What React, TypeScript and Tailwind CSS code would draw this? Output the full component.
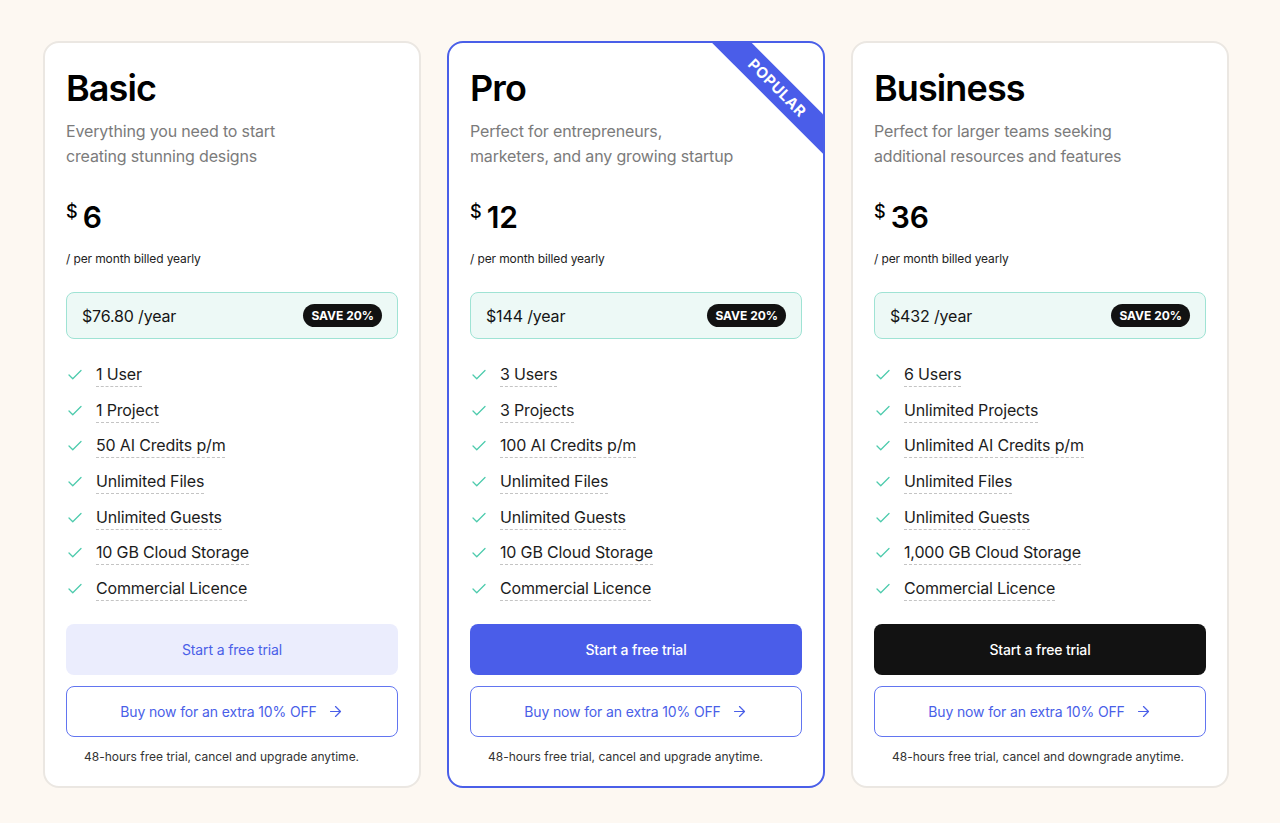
import { ArrowRight, Check } from "lucide-react";

type Plan = {
  name: string;
  description: string[];
  price: string;
  yearly: string;
  features: string[];
  footer: string;
  variant: "basic" | "pro" | "business";
};

const plans: Plan[] = [
  {
    name: "Basic",
    description: ["Everything you need to start", "creating stunning designs"],
    price: "6",
    yearly: "$76.80 /year",
    features: [
      "1 User",
      "1 Project",
      "50 AI Credits p/m",
      "Unlimited Files",
      "Unlimited Guests",
      "10 GB Cloud Storage",
      "Commercial Licence",
    ],
    footer: "48-hours free trial, cancel and upgrade anytime.",
    variant: "basic",
  },
  {
    name: "Pro",
    description: ["Perfect for entrepreneurs,", "marketers, and any growing startup"],
    price: "12",
    yearly: "$144 /year",
    features: [
      "3 Users",
      "3 Projects",
      "100 AI Credits p/m",
      "Unlimited Files",
      "Unlimited Guests",
      "10 GB Cloud Storage",
      "Commercial Licence",
    ],
    footer: "48-hours free trial, cancel and upgrade anytime.",
    variant: "pro",
  },
  {
    name: "Business",
    description: ["Perfect for larger teams seeking", "additional resources and features"],
    price: "36",
    yearly: "$432 /year",
    features: [
      "6 Users",
      "Unlimited Projects",
      "Unlimited AI Credits p/m",
      "Unlimited Files",
      "Unlimited Guests",
      "1,000 GB Cloud Storage",
      "Commercial Licence",
    ],
    footer: "48-hours free trial, cancel and downgrade anytime.",
    variant: "business",
  },
];

const trialStyles = {
  basic: "bg-[#ebedfd] text-[#4a5fe8] font-normal",
  pro: "bg-[#4a5de9] text-white font-medium",
  business: "bg-[#121212] text-white font-medium",
};

const PlanCard = ({ plan }: { plan: Plan }) => {
  const isPro = plan.variant === "pro";
  return (
    <div
      className={`relative w-[378px] overflow-hidden rounded-[16px] border-2 bg-white px-[21px] pt-[23px] pb-[21px] ${
        isPro ? "border-[#4a5fe8]" : "border-[#ebe7e2]"
      }`}
    >
      {isPro && (
        <div className="absolute left-[228px] top-[31px] flex h-[28px] w-[200px] rotate-45 items-center justify-center bg-[#4a5de9] text-[15px] font-bold tracking-[0.03em] text-white">
          POPULAR
        </div>
      )}
      <h2 className="text-[36px] leading-[44px] font-semibold tracking-[-0.025em] text-black">
        {plan.name}
      </h2>
      <p className="mt-[9px] text-[16px] leading-[25px] tracking-[-0.01em] text-[#7b7b7b]">
        {plan.description[0]}
        <br />
        {plan.description[1]}
      </p>
      <div className="mt-[30px] flex h-[36px] items-start gap-[5px] text-black">
        <span className="mt-[3px] text-[18px] leading-[20px] font-medium">$</span>
        <span className="text-[30px] leading-[36px] font-semibold">{plan.price}</span>
      </div>
      <p className="mt-[16px] text-[12px] leading-[16px] tracking-[-0.01em] text-[#222]">/ per month billed yearly</p>
      <div className="mt-[25px] flex h-[47px] items-center justify-between rounded-[8px] border border-[#9fe3d4] bg-[#edf9f6] pl-[15px] pr-[15px]">
        <span className="text-[16px] tracking-[-0.01em] text-[#151515]">{plan.yearly}</span>
        <span className="rounded-full bg-[#121212] px-[8px] py-[4px] text-[12px] leading-[15px] font-bold text-white">
          SAVE 20%
        </span>
      </div>
      <ul className="mt-[23px] flex flex-col gap-[10.67px]">
        {plan.features.map((feature) => (
          <li key={feature} className="flex items-start gap-[12px]">
            <Check size={18} strokeWidth={1.75} className="mt-[4px] shrink-0 text-[#4ecbad]" />
            <span className="border-b border-dashed border-[#c4c4c4] text-[16px] leading-[24px] tracking-[-0.01em] text-[#1c1c1c]">
              {feature}
            </span>
          </li>
        ))}
      </ul>
      <button
        className={`mt-[23px] flex h-[51px] w-full items-center justify-center rounded-[8px] text-[14px] tracking-[-0.01em] ${trialStyles[plan.variant]}`}
      >
        Start a free trial
      </button>
      <button className="mt-[11px] flex h-[51px] w-full items-center justify-center gap-[10px] rounded-[8px] border border-[#6275f0] bg-white text-[14px] tracking-[-0.01em] text-[#4a5fe8]">
        Buy now for an extra 10% OFF
        <ArrowRight size={17} strokeWidth={1.75} />
      </button>
      <p className="mt-[12px] pl-[18px] text-[12px] leading-[16px] text-[#333]">{plan.footer}</p>
    </div>
  );
};

export default function App() {
  return (
    <div
      className="min-h-[823px] w-[1280px] bg-[#fdf8f2] pl-[43px] pt-[41px]"
      style={{ fontFamily: "Inter, 'Noto Sans', sans-serif" }}
    >
      <div className="flex gap-[26px]">
        {plans.map((plan) => (
          <PlanCard key={plan.name} plan={plan} />
        ))}
      </div>
    </div>
  );
}
